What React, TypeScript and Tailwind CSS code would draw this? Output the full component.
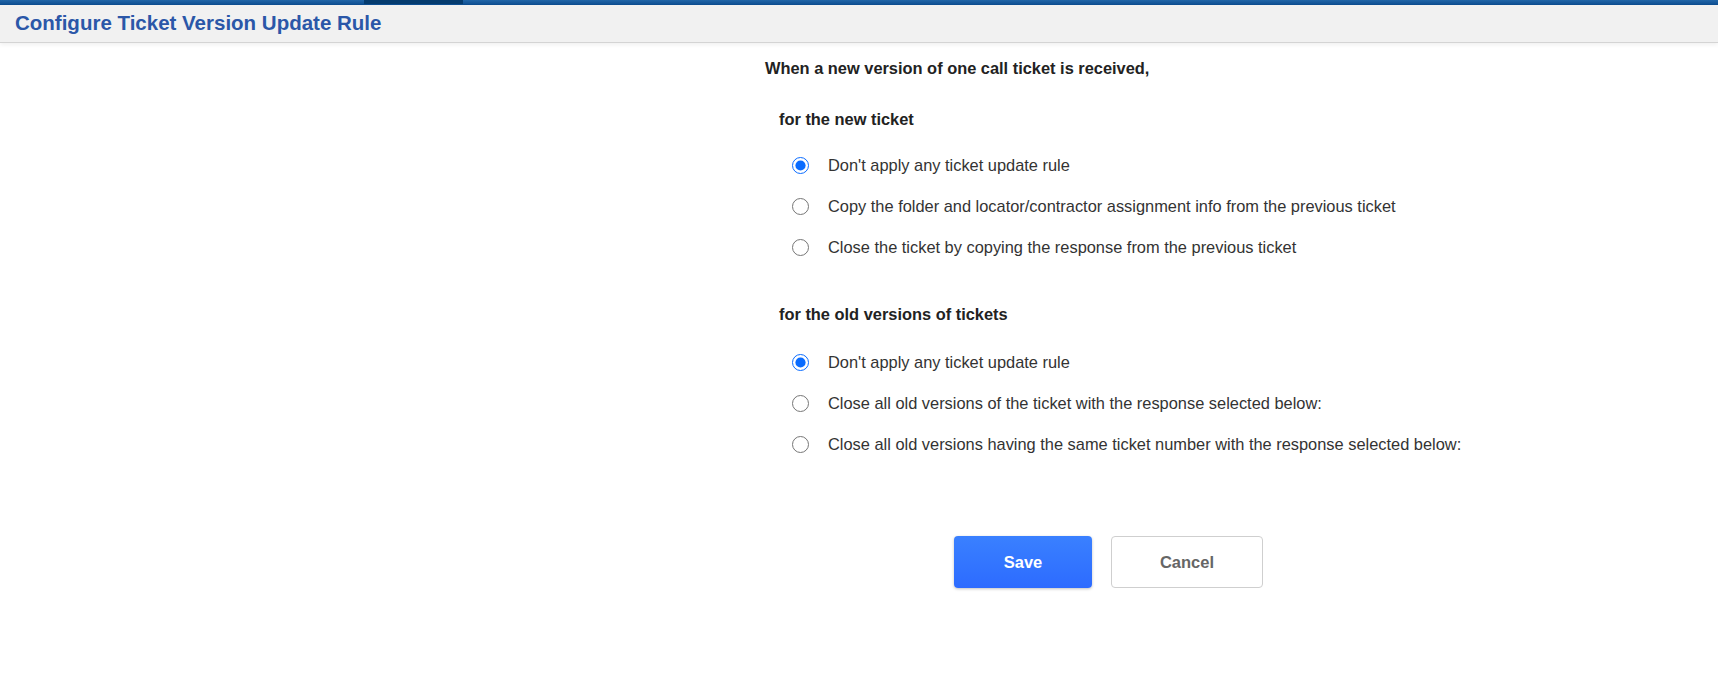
import { useState } from 'react';

type Option = { id: string; label: string };

const newTicketOptions: Option[] = [
  { id: 'none', label: "Don't apply any ticket update rule" },
  { id: 'copy', label: 'Copy the folder and locator/contractor assignment info from the previous ticket' },
  { id: 'close', label: 'Close the ticket by copying the response from the previous ticket' },
];

const oldTicketOptions: Option[] = [
  { id: 'none', label: "Don't apply any ticket update rule" },
  { id: 'closeAll', label: 'Close all old versions of the ticket with the response selected below:' },
  { id: 'closeSame', label: 'Close all old versions having the same ticket number with the response selected below:' },
];

function RadioGroup({
  name,
  options,
  value,
  onChange,
}: {
  name: string;
  options: Option[];
  value: string;
  onChange: (v: string) => void;
}) {
  return (
    <div className="flex flex-col gap-[21px] pl-[27px]">
      {options.map((opt) => (
        <label key={opt.id} className="flex items-center h-[20px] gap-[19px] cursor-pointer">
          <input
            type="radio"
            name={name}
            checked={value === opt.id}
            onChange={() => onChange(opt.id)}
            className="w-[17px] h-[17px] accent-[#0a6cff] shrink-0"
          />
          <span className="text-[16.4px] text-[#333] leading-[20px]">{opt.label}</span>
        </label>
      ))}
    </div>
  );
}

export default function App() {
  const [newRule, setNewRule] = useState('none');
  const [oldRule, setOldRule] = useState('none');

  return (
    <div className="min-h-screen bg-white font-['Liberation_Sans',Arial,sans-serif]">
      <div className="h-[5px] bg-gradient-to-b from-[#2166a8] to-[#0b4c8f] flex">
        <div className="ml-[364px] w-[99px] h-[4px] bg-[#053c6f]" />
      </div>
      <div className="h-[38px] bg-[#f1f1f1] border-b border-[#d4d4d4] shadow-[0_2px_4px_rgba(0,0,0,0.06)] flex items-center pl-[15px]">
        <h1 className="text-[20.5px] font-bold text-[#2b57a8] leading-none">
          Configure Ticket Version Update Rule
        </h1>
      </div>

      <div className="pl-[765px] pt-[15px]">
        <p className="text-[16.4px] font-bold text-[#222] leading-[20px]">
          When a new version of one call ticket is received,
        </p>

        <p className="mt-[31px] ml-[14px] text-[16.4px] font-bold text-[#222] leading-[20px]">
          for the new ticket
        </p>
        <div className="mt-[26px]">
          <RadioGroup name="newTicket" options={newTicketOptions} value={newRule} onChange={setNewRule} />
        </div>

        <p className="mt-[47px] ml-[14px] text-[16.4px] font-bold text-[#222] leading-[20px]">
          for the old versions of tickets
        </p>
        <div className="mt-[28px]">
          <RadioGroup name="oldTicket" options={oldTicketOptions} value={oldRule} onChange={setOldRule} />
        </div>

        <div className="mt-[82px] ml-[189px] flex gap-[19px]">
          <button className="w-[138px] h-[52px] rounded-[4px] bg-gradient-to-b from-[#3a80ff] to-[#2d6bff] text-white text-[16.5px] font-bold shadow-[0_1px_3px_rgba(0,0,0,0.25)]">
            Save
          </button>
          <button className="w-[152px] h-[52px] rounded-[4px] bg-white border border-[#cfcfcf] text-[#666] text-[16.5px] font-bold">
            Cancel
          </button>
        </div>
      </div>
    </div>
  );
}
